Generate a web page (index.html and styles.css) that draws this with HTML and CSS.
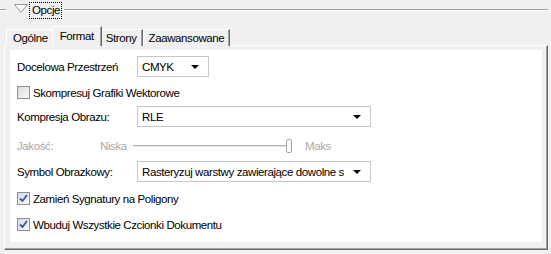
FILE: index.html
```html
<!DOCTYPE html>
<html lang="pl">
<head>
  <meta charset="UTF-8">
  <title>Opcje</title>
  <link rel="stylesheet" href="styles.css">
</head>
<body>
  <div class="group">
    <div class="group-head">
      <span class="dash"></span>
      <svg class="toggle" width="14" height="10" viewBox="0 0 14 10">
        <path d="M0.5 0.5 L13.5 0.5 L7 8.5 Z" fill="#fafafa" stroke="#9a9a9a" stroke-width="1"/>
      </svg>
      <span class="title">Opcje</span>
      <span class="rule"></span>
    </div>

    <div class="tabs">
      <div class="tab first">Ogólne</div>
      <div class="tab active">Format</div>
      <div class="tab">Strony</div>
      <div class="tab">Zaawansowane</div>
    </div>

    <div class="panel">
      <div class="page">
        <div class="row r1">
          <span class="label">Docelowa Przestrzeń</span>
          <div class="select small"><span>CMYK</span><i class="arrow"></i></div>
        </div>

        <div class="check r2">
          <span class="box"></span>
          <span>Skompresuj Grafiki Wektorowe</span>
        </div>

        <div class="row r3">
          <span class="label">Kompresja Obrazu:</span>
          <div class="select wide"><span>RLE</span><i class="arrow"></i></div>
        </div>

        <div class="row r4 disabled">
          <span class="q-label">Jakość:</span>
          <span class="lo">Niska</span>
          <div class="slider"><span class="track"></span><span class="thumb"></span></div>
          <span class="hi">Maks</span>
        </div>

        <div class="row r5">
          <span class="label">Symbol Obrazkowy:</span>
          <div class="select wide"><span class="clip">Rasteryzuj warstwy zawierające dowolne sy</span><i class="arrow"></i></div>
        </div>

        <div class="check r6">
          <span class="box checked">
            <svg width="9" height="9" viewBox="0 0 9 9"><path d="M1 4.5 L3.5 7 L8 1" fill="none" stroke="#3c4fa0" stroke-width="1.8"/></svg>
          </span>
          <span>Zamień Sygnatury na Poligony</span>
        </div>

        <div class="check r7">
          <span class="box checked">
            <svg width="9" height="9" viewBox="0 0 9 9"><path d="M1 4.5 L3.5 7 L8 1" fill="none" stroke="#3c4fa0" stroke-width="1.8"/></svg>
          </span>
          <span>Wbuduj Wszystkie Czcionki Dokumentu</span>
        </div>
      </div>
    </div>
  </div>
</body>
</html>
```

FILE: styles.css
```css
body {
  margin: 0;
  background-color: #f0f0f0;
  font-family: "Liberation Sans", Arial, sans-serif;
  font-size: 11.5px;
  letter-spacing: -0.4px;
  color: #000;
}

.group {
  width: 548px;
}

.group-head {
  display: flex;
  align-items: center;
  height: 20px;
}

.dash {
  width: 6px;
  border-top: 1px solid #a0a0a0;
  border-bottom: 1px solid #fff;
}

.toggle {
  margin-left: 8px;
  margin-top: -2px;
}

.title {
  margin-left: 1px;
  padding: 1px 1px 2px 2px;
  border: 1px dotted #000;
  line-height: 12px;
}

.rule {
  flex: 1;
  margin-left: 2px;
  border-top: 1px solid #a0a0a0;
  border-bottom: 1px solid #fff;
}

.tabs {
  display: flex;
  align-items: flex-end;
  height: 20px;
  margin-top: 6px;
  padding-left: 6px;
  position: relative;
  z-index: 1;
}

.tab {
  height: 17px;
  line-height: 16px;
  padding: 0 5px;
  border-top: 1px solid #fff;
  border-left: 1px solid #fff;
  border-right: 1px solid #696969;
  box-shadow: inset -1px 0 #a0a0a0;
  box-sizing: border-box;
  background-color: #f0f0f0;
}

.tab.first {
  padding: 0 5px 0 6px;
}

.tab.active {
  height: 20px;
  line-height: 19px;
  margin: 0 -2px;
  padding: 0 7px;
  position: relative;
}

.panel {
  margin-top: -1px;
  margin-left: 4px;
  height: 205px;
  box-sizing: border-box;
  border-top: 1px solid #fff;
  border-left: 1px solid #fff;
  border-right: 1px solid #696969;
  border-bottom: 1px solid #696969;
  box-shadow: inset -1px -1px #a0a0a0;
  padding: 4px 5px 7px 5px;
}

.page {
  background-color: #fff;
  height: 100%;
  padding-left: 7px;
  padding-top: 6px;
  box-sizing: border-box;
}

.row {
  display: flex;
  align-items: center;
  height: 21px;
}

.label {
  width: 120px;
  flex-shrink: 0;
}

.select {
  height: 21px;
  box-sizing: border-box;
  border: 1px solid #c6c6c6;
  display: flex;
  align-items: center;
  padding-left: 4px;
  padding-right: 9px;
  background-color: #fff;
}

.select span {
  flex: 1;
}

.select .clip {
  white-space: nowrap;
  overflow: hidden;
  margin-right: 9px;
}

.select.small {
  width: 72px;
}

.select.wide {
  width: 234px;
}

.arrow {
  width: 0;
  height: 0;
  border-left: 4px solid transparent;
  border-right: 4px solid transparent;
  border-top: 4px solid #000;
}

.check {
  display: flex;
  align-items: center;
  height: 13px;
}

.box {
  width: 13px;
  height: 13px;
  box-sizing: border-box;
  border: 1px solid #8e8f8f;
  background: linear-gradient(135deg, #dcdcdc, #f8f8f8);
  margin-right: 3px;
  display: flex;
  align-items: center;
  justify-content: center;
}

.box.checked {
  background: linear-gradient(135deg, #d6dce6, #f6f7fa);
}

.r2 { margin-top: 9px; }
.r3 { margin-top: 7px; }
.r4 { margin-top: 12px; height: 14px; }
.r5 { margin-top: 8px; }
.r6 { margin-top: 10px; }
.r7 { margin-top: 13px; }

.disabled {
  color: #a9a9a9;
}

.q-label {
  width: 83px;
  flex-shrink: 0;
}

.lo {
  width: 33px;
  flex-shrink: 0;
}

.slider {
  width: 159px;
  height: 14px;
  display: flex;
  align-items: center;
  position: relative;
}

.track {
  flex: 1;
  border-top: 1px solid #b0b0b0;
  border-bottom: 1px solid #e8e8e8;
}

.thumb {
  position: absolute;
  right: 0;
  top: 0;
  width: 6px;
  height: 14px;
  box-sizing: border-box;
  border: 1px solid #a6a6a6;
  border-radius: 2px;
  background-color: #fafafa;
}

.hi {
  margin-left: 13px;
}
```
